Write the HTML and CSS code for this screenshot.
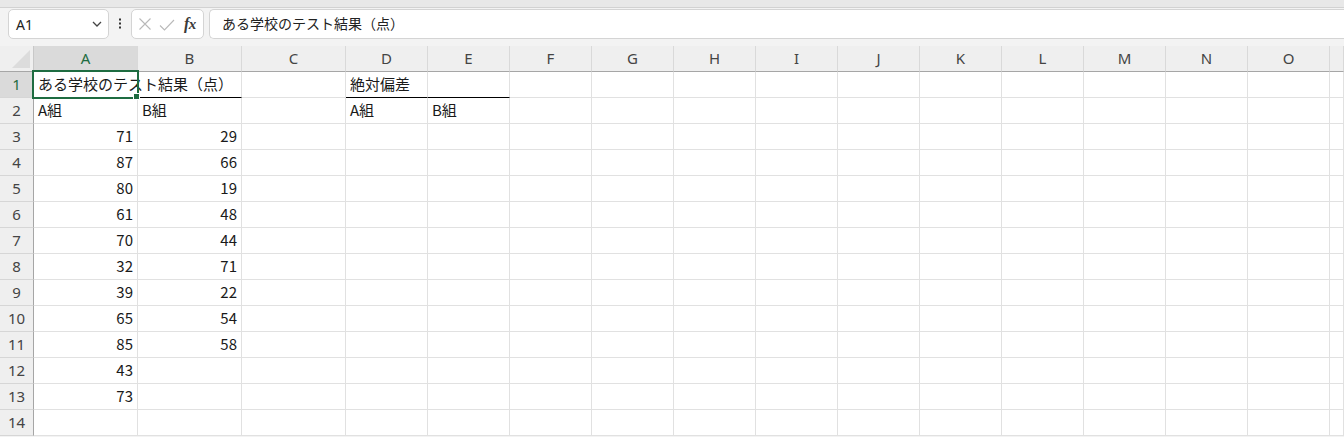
FILE: index.html
```html
<!DOCTYPE html>
<html lang="ja">
<head>
<meta charset="utf-8">
<title>Sheet</title>
<link rel="stylesheet" href="styles.css">
</head>
<body>
<div class="app">
  <div class="edge"></div>
  <div class="fbar">
    <div class="namebox">
      <span class="nb-text">A1</span>
      <svg class="chev" width="10" height="6" viewBox="0 0 10 6"><polyline points="1,1 5,5 9,1" fill="none" stroke="#444" stroke-width="1.3"/></svg>
    </div>
    <div class="dots">
      <svg width="4" height="12" viewBox="0 0 4 12"><rect x="1" y="0.5" width="2" height="2" fill="#333"/><rect x="1" y="4.5" width="2" height="2" fill="#333"/><rect x="1" y="8.5" width="2" height="2" fill="#333"/></svg>
    </div>
    <div class="fxbox">
      <svg class="ic-x" width="14" height="14" viewBox="0 0 14 14"><path d="M1.5 1.5 L12.5 12.5 M12.5 1.5 L1.5 12.5" stroke="#b9b9b9" stroke-width="1.1" fill="none"/></svg>
      <svg class="ic-ok" width="16" height="12" viewBox="0 0 16 12"><path d="M1 6.5 L5.5 11 L15 1" stroke="#b9b9b9" stroke-width="1.1" fill="none"/></svg>
      <span class="fx">f<span class="fx-x">x</span></span>
    </div>
    <div class="finput">ある学校のテスト結果（点）</div>
  </div>

  <div class="sheet">
    <div class="row hdr">
      <div class="corner"><svg width="19" height="18" viewBox="0 0 19 18"><polygon points="0,18 18,0 18,18" fill="#dcdcdc"/></svg></div>
      <div class="ch sel">A</div><div class="ch">B</div><div class="ch">C</div><div class="ch">D</div><div class="ch">E</div><div class="ch">F</div><div class="ch">G</div><div class="ch">H</div><div class="ch">I</div><div class="ch">J</div><div class="ch">K</div><div class="ch">L</div><div class="ch">M</div><div class="ch">N</div><div class="ch">O</div><div class="ch"></div>
    </div>

    <div class="row">
      <div class="rh sel">1</div>
      <div class="c active bb">ある学校のテスト結果（点）<div class="selbox"><div class="handle"></div></div></div>
      <div class="c bb"></div><div class="c"></div><div class="c bb">絶対偏差</div><div class="c bb"></div><div class="c"></div><div class="c"></div><div class="c"></div><div class="c"></div><div class="c"></div><div class="c"></div><div class="c"></div><div class="c"></div><div class="c"></div><div class="c"></div><div class="c"></div>
    </div>
    <div class="row">
      <div class="rh">2</div>
      <div class="c">A組</div><div class="c">B組</div><div class="c"></div><div class="c">A組</div><div class="c">B組</div><div class="c"></div><div class="c"></div><div class="c"></div><div class="c"></div><div class="c"></div><div class="c"></div><div class="c"></div><div class="c"></div><div class="c"></div><div class="c"></div><div class="c"></div>
    </div>
    <div class="row">
      <div class="rh">3</div>
      <div class="c n">71</div><div class="c n">29</div><div class="c"></div><div class="c"></div><div class="c"></div><div class="c"></div><div class="c"></div><div class="c"></div><div class="c"></div><div class="c"></div><div class="c"></div><div class="c"></div><div class="c"></div><div class="c"></div><div class="c"></div><div class="c"></div>
    </div>
    <div class="row">
      <div class="rh">4</div>
      <div class="c n">87</div><div class="c n">66</div><div class="c"></div><div class="c"></div><div class="c"></div><div class="c"></div><div class="c"></div><div class="c"></div><div class="c"></div><div class="c"></div><div class="c"></div><div class="c"></div><div class="c"></div><div class="c"></div><div class="c"></div><div class="c"></div>
    </div>
    <div class="row">
      <div class="rh">5</div>
      <div class="c n">80</div><div class="c n">19</div><div class="c"></div><div class="c"></div><div class="c"></div><div class="c"></div><div class="c"></div><div class="c"></div><div class="c"></div><div class="c"></div><div class="c"></div><div class="c"></div><div class="c"></div><div class="c"></div><div class="c"></div><div class="c"></div>
    </div>
    <div class="row">
      <div class="rh">6</div>
      <div class="c n">61</div><div class="c n">48</div><div class="c"></div><div class="c"></div><div class="c"></div><div class="c"></div><div class="c"></div><div class="c"></div><div class="c"></div><div class="c"></div><div class="c"></div><div class="c"></div><div class="c"></div><div class="c"></div><div class="c"></div><div class="c"></div>
    </div>
    <div class="row">
      <div class="rh">7</div>
      <div class="c n">70</div><div class="c n">44</div><div class="c"></div><div class="c"></div><div class="c"></div><div class="c"></div><div class="c"></div><div class="c"></div><div class="c"></div><div class="c"></div><div class="c"></div><div class="c"></div><div class="c"></div><div class="c"></div><div class="c"></div><div class="c"></div>
    </div>
    <div class="row">
      <div class="rh">8</div>
      <div class="c n">32</div><div class="c n">71</div><div class="c"></div><div class="c"></div><div class="c"></div><div class="c"></div><div class="c"></div><div class="c"></div><div class="c"></div><div class="c"></div><div class="c"></div><div class="c"></div><div class="c"></div><div class="c"></div><div class="c"></div><div class="c"></div>
    </div>
    <div class="row">
      <div class="rh">9</div>
      <div class="c n">39</div><div class="c n">22</div><div class="c"></div><div class="c"></div><div class="c"></div><div class="c"></div><div class="c"></div><div class="c"></div><div class="c"></div><div class="c"></div><div class="c"></div><div class="c"></div><div class="c"></div><div class="c"></div><div class="c"></div><div class="c"></div>
    </div>
    <div class="row">
      <div class="rh">10</div>
      <div class="c n">65</div><div class="c n">54</div><div class="c"></div><div class="c"></div><div class="c"></div><div class="c"></div><div class="c"></div><div class="c"></div><div class="c"></div><div class="c"></div><div class="c"></div><div class="c"></div><div class="c"></div><div class="c"></div><div class="c"></div><div class="c"></div>
    </div>
    <div class="row">
      <div class="rh">11</div>
      <div class="c n">85</div><div class="c n">58</div><div class="c"></div><div class="c"></div><div class="c"></div><div class="c"></div><div class="c"></div><div class="c"></div><div class="c"></div><div class="c"></div><div class="c"></div><div class="c"></div><div class="c"></div><div class="c"></div><div class="c"></div><div class="c"></div>
    </div>
    <div class="row">
      <div class="rh">12</div>
      <div class="c n">43</div><div class="c"></div><div class="c"></div><div class="c"></div><div class="c"></div><div class="c"></div><div class="c"></div><div class="c"></div><div class="c"></div><div class="c"></div><div class="c"></div><div class="c"></div><div class="c"></div><div class="c"></div><div class="c"></div><div class="c"></div>
    </div>
    <div class="row">
      <div class="rh">13</div>
      <div class="c n">73</div><div class="c"></div><div class="c"></div><div class="c"></div><div class="c"></div><div class="c"></div><div class="c"></div><div class="c"></div><div class="c"></div><div class="c"></div><div class="c"></div><div class="c"></div><div class="c"></div><div class="c"></div><div class="c"></div><div class="c"></div>
    </div>
    <div class="row">
      <div class="rh">14</div>
      <div class="c"></div><div class="c"></div><div class="c"></div><div class="c"></div><div class="c"></div><div class="c"></div><div class="c"></div><div class="c"></div><div class="c"></div><div class="c"></div><div class="c"></div><div class="c"></div><div class="c"></div><div class="c"></div><div class="c"></div><div class="c"></div>
    </div>
  </div>
</div>
</body>
</html>
```

FILE: styles.css
```css
* { box-sizing: border-box; }
html, body { margin: 0; padding: 0; }
body {
  width: 1344px;
  height: 437px;
  overflow: hidden;
  background: #f3f3f3;
  font-family: "Noto Sans", "Noto Sans CJK JP", sans-serif;
}
.app { display: flex; flex-direction: column; }

.edge {
  height: 8px;
  background: #e8e8e8;
  border-bottom: 1px solid #d2d2d2;
}

.fbar {
  height: 38px;
  display: flex;
  align-items: flex-start;
  padding: 1px 0 0 8px;
}
.namebox {
  width: 101px;
  height: 30px;
  background: #fff;
  border: 1px solid #d4d4d4;
  border-radius: 5px;
  display: flex;
  align-items: center;
  justify-content: space-between;
  padding: 0 6px 0 7px;
  font-size: 14px;
  color: #222;
}
.nb-text { padding-top: 1px; }
.chev { display: block; }
.dots {
  width: 22px;
  height: 30px;
  display: flex;
  align-items: center;
  justify-content: center;
  padding-bottom: 1px;
}
.dots svg { display: block; }
.fxbox {
  width: 73px;
  height: 30px;
  background: #fff;
  border: 1px solid #d4d4d4;
  border-radius: 5px;
  display: flex;
  align-items: center;
  padding: 0 0 0 6px;
}
.ic-x { display: block; margin-right: 7px; }
.ic-ok { display: block; margin-right: 9px; margin-top: 1px; }
.fx {
  font-family: "Liberation Serif", "DejaVu Serif", serif;
  font-style: italic;
  font-weight: bold;
  font-size: 16px;
  color: #3a3a3a;
  letter-spacing: -0.5px;
}
.fx-x { font-size: 15px; }
.finput {
  flex: 1;
  height: 30px;
  margin-left: 5px;
  background: #fff;
  border: 1px solid #d4d4d4;
  border-right: none;
  border-radius: 5px 0 0 5px;
  padding: 0 0 0 12px;
  font-family: "Noto Sans CJK JP", sans-serif;
  font-size: 14px;
  line-height: 27px;
  color: #222;
}

.sheet { background: #fff; }
.row {
  display: grid;
  grid-template-columns: 34px repeat(3, 104px) repeat(12, 82px) 1fr;
  height: 26px;
}
.hdr { background: #efefef; }
.corner {
  border-right: 1px solid #c8c8c8;
  border-bottom: 1px solid #a6a6a6;
  display: flex;
  align-items: flex-end;
  justify-content: flex-end;
  padding: 0 2px 3px 0;
  position: relative;
}
.corner svg { display: block; }
.ch {
  border-right: 1px solid #d9d9d9;
  border-bottom: 1px solid #a6a6a6;
  text-align: center;
  font-size: 15px;
  line-height: 25px;
  color: #444;
}
.ch.sel { background: #dadada; color: #1e6c41; }

.rh {
  background: #efefef;
  border-right: 1px solid #a6a6a6;
  border-bottom: 1px solid #d6d6d6;
  text-align: center;
  font-size: 15px;
  line-height: 25px;
  color: #444;
}
.rh.sel { background: #dadada; color: #1e6c41; }

.c {
  border-right: 1px solid #e1e1e1;
  border-bottom: 1px solid #e1e1e1;
  padding: 0 4px;
  font-family: "Noto Sans CJK JP", sans-serif;
  font-size: 15px;
  line-height: 23px;
  color: #1a1a1a;
  white-space: nowrap;
  overflow: visible;
}
.c.n { text-align: right; }
.c.bb { border-bottom-color: #000; }
.c.active { position: relative; }
.selbox {
  position: absolute;
  inset: -2px;
  border: 2px solid #1e6c41;
  pointer-events: none;
}
.handle {
  position: absolute;
  right: -3px;
  bottom: -3px;
  width: 7px;
  height: 7px;
  background: #1e6c41;
  border: 1px solid #fff;
}
```
